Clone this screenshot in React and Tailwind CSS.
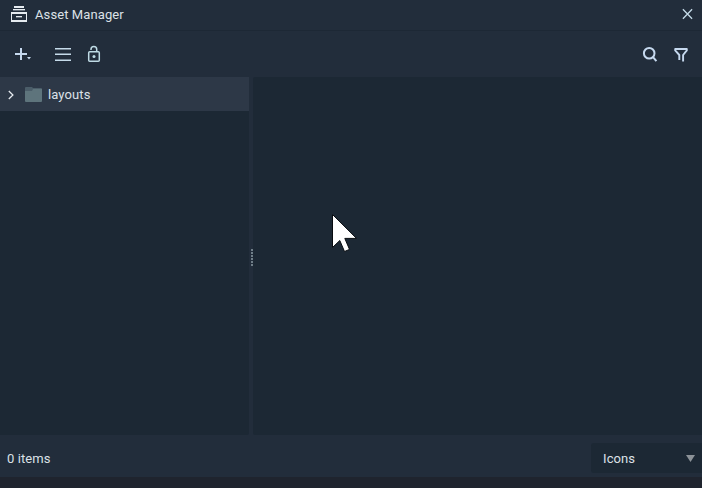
function Header() {
  return (
    <header className="flex h-[31px] shrink-0 items-center border-b border-[#1d2835] pl-[11px] pr-[9px]">
      <svg className="mt-[-2px] h-[17px] w-4" viewBox="0 0 16 17" fill="#e6ebf0" shapeRendering="crispEdges">
        <path d="M3 0h10v2H3zM2 3h12v1H2zM5 10h6v1H5z" />
        <path d="M2 4h12v1H2zM5 11h6v1H5z" opacity="0.35" />
        <path d="M0 6h16v10H0zM1 8v6h14V8z" fillRule="evenodd" />
      </svg>
      <h1 className="ml-2 flex-1 leading-[30px]">Asset Manager</h1>
      <svg className="mt-[-2px] h-3 w-3" viewBox="0 0 12 12" fill="none" stroke="#c5dbe8" strokeWidth="1.3">
        <path d="M1.9 1.3l9.2 9.4M11.1 1.3L1.9 10.7" />
      </svg>
    </header>
  );
}

function Toolbar() {
  return (
    <div className="flex h-[46px] shrink-0 items-center justify-between pl-[14px] pr-[13px]">
      <div className="flex items-center">
        <svg className="h-5 w-[18px]" viewBox="0 0 18 20" fill="none" stroke="#c6d9ef" strokeWidth="2">
          <path d="M1 10h12M7 4v12" />
          <path d="M13 13h4l-2 2.4z" fill="#c6d9ef" stroke="none" />
        </svg>
        <svg className="ml-[23px] h-5 w-4" viewBox="0 0 16 20" fill="none" stroke="#c6dbea" strokeWidth="1.6">
          <path d="M0 4.8h16M0 10.3h16M0 16.2h16" />
        </svg>
        <svg className="ml-[16px] h-5 w-[14px]" viewBox="0 0 14 20" fill="none" stroke="#bfdbe5" strokeWidth="1.5">
          <rect x="1.7" y="7.8" width="10.6" height="9.5" rx="1" />
          <path d="M4 6V5.3a2.8 2.8 0 0 1 5.7 0v2.5" />
          <circle cx="7" cy="12.6" r="1.5" fill="#bfdbe5" stroke="none" />
        </svg>
      </div>
      <div className="flex items-center">
        <svg className="h-5 w-4" viewBox="0 0 16 20" fill="none" stroke="#c6d9ef" strokeWidth="2">
          <circle cx="7.2" cy="9.2" r="5.3" />
          <path d="M11 13.2l3.4 4" />
        </svg>
        <svg className="ml-[15px] h-5 w-4" viewBox="0 0 16 20" fill="none" stroke="#c6d9ef" strokeWidth="1.9" strokeLinejoin="round">
          <path d="M6.3 16v-5L2.2 6.4V5h11.6v1.4L10.1 11v6.6" />
        </svg>
      </div>
    </div>
  );
}

function TreePanel() {
  return (
    <aside className="w-[249px] shrink-0 overflow-hidden rounded-br-[2px] bg-[#1c2834]">
      <div className="flex h-[34px] items-center bg-[#2d3847] pl-2 pt-px">
        <svg className="h-[10px] w-[6px]" viewBox="0 0 6 10" fill="none" stroke="#e2e7ec" strokeWidth="1.3">
          <path d="M.8 1L4.9 5 .8 9" />
        </svg>
        <svg className="ml-[11px] h-[15px] w-[17px]" viewBox="0 0 17 15">
          <path d="M0 1a1 1 0 0 1 1-1h6l1 1h8a1 1 0 0 1 1 1v5H0z" fill="#4b5d69" />
          <path d="M0 4h7l1-2h9v12a1 1 0 0 1-1 1H1a1 1 0 0 1-1-1z" fill="#5e747c" />
        </svg>
        <span className="ml-[6px] pt-px">layouts</span>
      </div>
    </aside>
  );
}

function Splitter() {
  return (
    <div className="flex w-1 shrink-0 flex-col items-end gap-px pt-[172px]">
      {[0, 1, 2, 3, 4, 5].map((dot) => (
        <span key={dot} className="h-[2px] w-[2px] bg-[#6f7e88]" />
      ))}
    </div>
  );
}

function Footer() {
  return (
    <footer className="flex h-[42px] shrink-0 items-center justify-between pl-[7px]">
      <span className="mt-[6px]">0 items</span>
      <div className="mt-[4px] flex h-[30px] w-[111px] items-center justify-between rounded-l-[3px] bg-[#1c2834] pl-3 pr-[7px]">
        <span className="pt-[2px]">Icons</span>
        <svg className="h-[7px] w-[9px]" viewBox="0 0 9 7" fill="#8c9298">
          <path d="M0 0h9L4.5 7z" />
        </svg>
      </div>
    </footer>
  );
}

export default function App() {
  return (
    <div className="relative flex h-[488px] w-[702px] flex-col overflow-hidden bg-[#222d3b] font-['Roboto',sans-serif] text-[13px] tracking-[0.1px] text-[#dce1e7]">
      <Header />
      <Toolbar />
      <main className="flex h-[358px] shrink-0">
        <TreePanel />
        <Splitter />
        <section className="flex-1 rounded-l-[2px] bg-[#1c2834]" />
      </main>
      <Footer />
      <div className="h-[11px] shrink-0 bg-[#1f242e]" />
      <svg className="absolute left-[331px] top-[212px] h-[42px] w-[28px]" viewBox="0 0 28 42" fill="#fff" stroke="#080c10" strokeWidth="1">
        <path d="M1.5 2.5v33l7.3-7 4.7 11 5-2.1-4.7-11h11.7z" />
      </svg>
    </div>
  );
}
